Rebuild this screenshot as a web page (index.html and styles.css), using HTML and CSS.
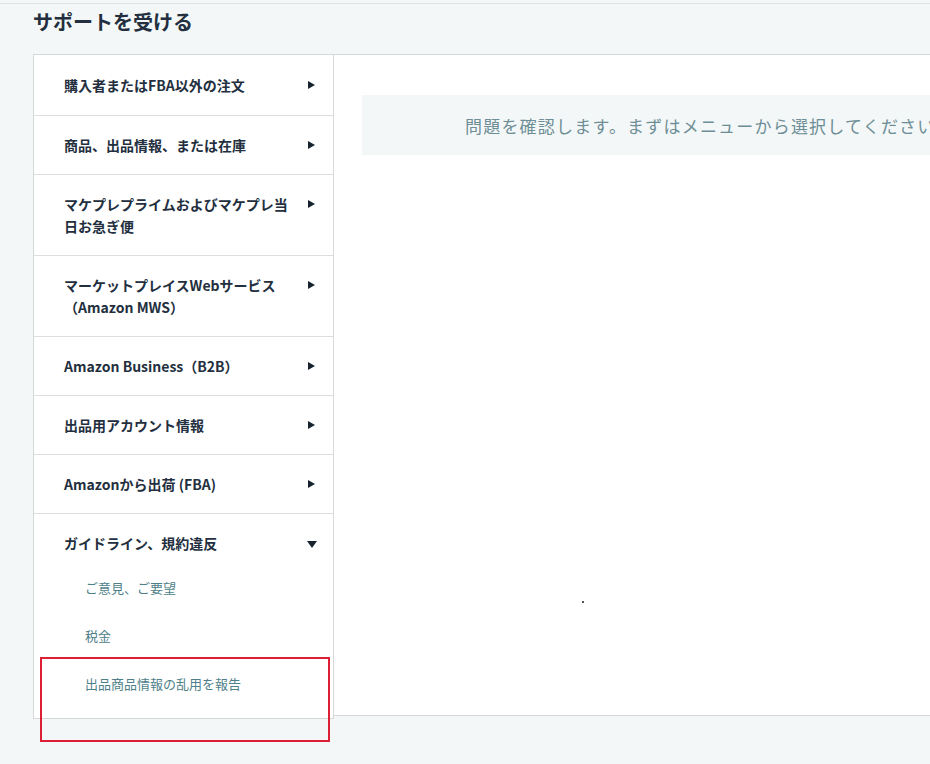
FILE: index.html
```html
<!DOCTYPE html>
<html lang="ja">
<head>
<meta charset="UTF-8">
<meta name="viewport" content="width=device-width, initial-scale=1.0">
<title>サポートを受ける</title>
<link rel="stylesheet" href="styles.css">
</head>
<body>

<div class="top-bar"></div>
<h1 class="page-title">サポートを受ける</h1>

<div class="layout">
    <ul class="menu">
        <li class="menu-item"><span class="label">購入者またはFBA以外の注文</span><span class="arrow"></span></li>
        <li class="menu-item"><span class="label">商品、出品情報、または在庫</span><span class="arrow"></span></li>
        <li class="menu-item"><span class="label">マケプレプライムおよびマケプレ当日お急ぎ便</span><span class="arrow"></span></li>
        <li class="menu-item"><span class="label">マーケットプレイスWebサービス（Amazon MWS）</span><span class="arrow"></span></li>
        <li class="menu-item"><span class="label">Amazon Business（B2B）</span><span class="arrow"></span></li>
        <li class="menu-item"><span class="label">出品用アカウント情報</span><span class="arrow"></span></li>
        <li class="menu-item"><span class="label">Amazonから出荷 (FBA)</span><span class="arrow"></span></li>
        <li class="menu-item open">
            <div class="menu-head"><span class="label">ガイドライン、規約違反</span><span class="arrow down"></span></div>
            <ul class="sub-menu">
                <li>ご意見、ご要望</li>
                <li>税金</li>
                <li class="marked">出品商品情報の乱用を報告</li>
            </ul>
        </li>
    </ul>

    <div class="content">
        <div class="notice">問題を確認します。まずはメニューから選択してください。</div>
        <span class="dot"></span>
    </div>
</div>

</body>
</html>
```

FILE: styles.css
```css
html, body {
    margin: 0;
    padding: 0;
}

body {
    font-family: "Noto Sans CJK JP", "Noto Sans", sans-serif;
    background-color: #f4f7f8;
    color: #232f3e;
    overflow: hidden;
    width: 930px;
    height: 764px;
}

.top-bar {
    height: 3px;
    border-bottom: 1px solid #dfe3e5;
}

.page-title {
    margin: 0 0 0 33px;
    height: 50px;
    font-size: 20px;
    font-weight: 700;
    line-height: 36px;
}

.layout {
    display: flex;
    align-items: flex-start;
    margin-left: 33px;
    width: 1100px;
}

/* Left menu */
.menu {
    list-style: none;
    margin: 0;
    padding: 0;
    width: 299px;
    background-color: #fff;
    border: 1px solid #d5d9d9;
}

.menu-item {
    display: flex;
    align-items: flex-start;
    justify-content: space-between;
    padding: 18px 18px 18px 30px;
    border-bottom: 1px solid #dcdfe0;
    font-size: 14px;
    font-weight: 700;
    line-height: 22px;
}

.menu-item:first-child {
    padding-top: 19px;
    padding-bottom: 19px;
}

.menu-item .label {
    width: 225px;
}

.arrow {
    width: 0;
    height: 0;
    margin-top: 7px;
    border-top: 4px solid transparent;
    border-bottom: 4px solid transparent;
    border-left: 7px solid #16232e;
}

.arrow.down {
    margin-top: 9px;
    margin-right: -2px;
    border-left: 5px solid transparent;
    border-right: 5px solid transparent;
    border-top: 7px solid #16232e;
    border-bottom: none;
}

.menu-item.open {
    display: block;
    border-bottom: none;
    padding: 18px 18px 10px 30px;
}

.menu-head {
    display: flex;
    justify-content: space-between;
    align-items: flex-start;
    padding-bottom: 10px;
}

.sub-menu {
    list-style: none;
    margin: 0;
    padding: 0 0 0 21px;
}

.sub-menu li {
    padding: 14px 0;
    font-size: 13px;
    font-weight: 400;
    line-height: 20px;
    color: #4f7f89;
}

/* Red annotation box */
.sub-menu li.marked {
    position: relative;
}

.sub-menu li.marked::after {
    content: "";
    position: absolute;
    left: -45px;
    top: -3px;
    width: 286px;
    height: 81px;
    border: 2px solid #dc1f35;
}

/* Right content */
.content {
    position: relative;
    flex: 1;
    height: 620px;
    margin-left: -1px;
    background-color: #fff;
    border-top: 1px solid #d5d9d9;
    border-bottom: 1px solid #d5d9d9;
    border-left: 1px solid #d5d9d9;
    padding: 40px 0 0 28px;
}

.notice {
    width: 620px;
    height: 60px;
    padding-left: 103px;
    background-color: #f4f7f8;
    color: #6d8e96;
    font-size: 17px;
    letter-spacing: 1.2px;
    line-height: 62px;
    white-space: nowrap;
}

.dot {
    position: absolute;
    left: 248px;
    top: 546px;
    width: 2px;
    height: 2px;
    background-color: #555;
}
```
